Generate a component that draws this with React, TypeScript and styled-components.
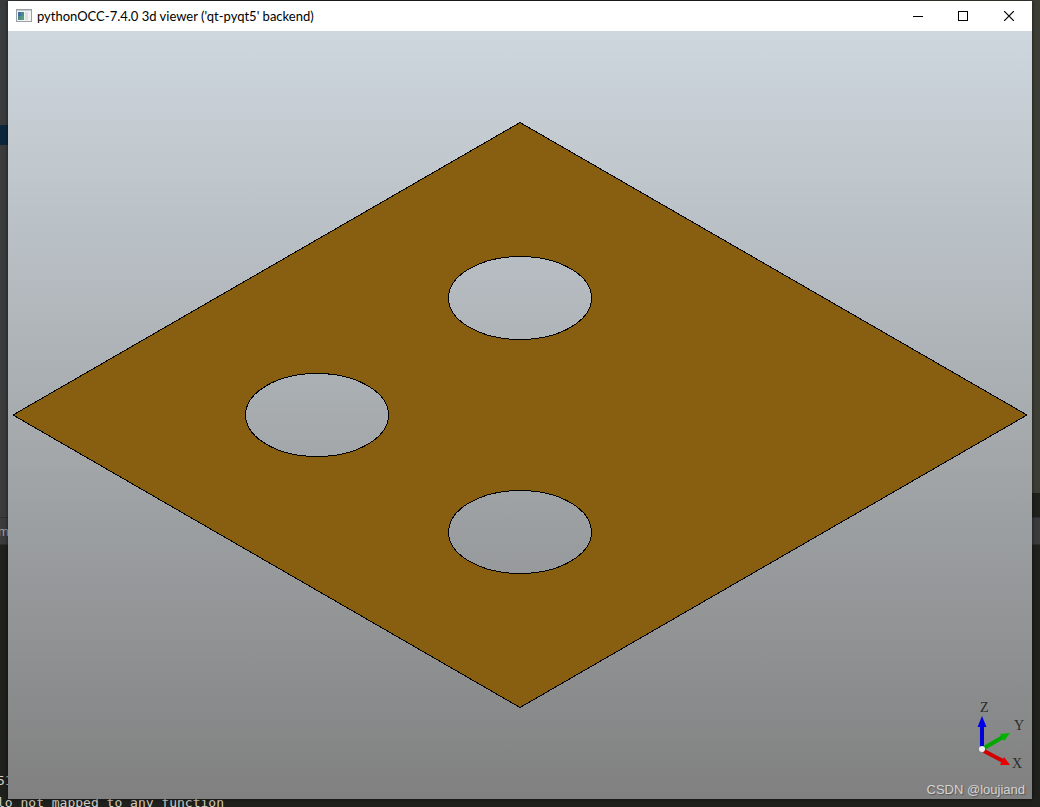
import React from "react";
import styled, { createGlobalStyle } from "styled-components";

const GlobalStyle = createGlobalStyle`
  *, *::before, *::after { box-sizing: border-box; }
  body { margin: 0; background: #20211c; }
`;

const Desktop = styled.div`
  position: relative;
  display: flex;
  min-height: 100vh;
  padding: 1px 8px 8px;
  overflow: hidden;
`;

const Editor = styled.div`
  position: absolute;
  inset: 0 0 -7px;
  display: flex;
  flex-direction: column;
  background: #20211c;
`;

const EditorBody = styled.div`
  flex: 1;
  display: flex;
  justify-content: space-between;
`;

const ProjectTree = styled.div`
  width: 120px;
  padding-top: 125px;
  background: #393b3d;
`;

const SelectedRow = styled.div`
  height: 20px;
  background: #0c273c;
`;

const CodeMargin = styled.div`
  width: 120px;
  border-bottom: 24px solid #20211c;
  background: #3d3e35;
`;

const ToolHeader = styled.div`
  height: 28px;
  border-top: 1px solid #2c2e2f;
  border-bottom: 1px solid #2c2e2f;
  background: #393b3d;
  color: #9da0a2;
  font: 13px/28px "Liberation Sans", sans-serif;
  text-indent: -2px;
`;

const Console = styled.div`
  height: 269px;
  display: flex;
  flex-direction: column;
  justify-content: flex-end;
  color: #d6d0c4;
  font: 13px/22px "DejaVu Sans Mono", monospace;
  white-space: pre;
`;

const ConsoleLine = styled.div`
  margin-left: -3px;
`;

const Window = styled.main`
  position: relative;
  flex: 1;
  display: flex;
  flex-direction: column;
  background: #fff;
  box-shadow: 0 0 4px rgba(0, 0, 0, 0.6);
`;

const TitleBar = styled.header`
  display: flex;
  align-items: center;
  height: 30px;
  padding-left: 8px;
  background: #fff;
`;

const Title = styled.h1`
  flex: 1;
  margin: 0 0 0 5px;
  color: #000;
  font: 400 13px/30px Lato, sans-serif;
`;

const WindowButton = styled.button`
  display: flex;
  align-items: center;
  justify-content: center;
  width: 46px;
  height: 30px;
  padding: 0;
  border: 0;
  background: transparent;
`;

const Viewport = styled.section`
  position: relative;
  flex: 1;
  display: flex;
  background: linear-gradient(#ced7de, #808080);
`;

const Scene = styled.svg`
  flex: 1;
  width: 100%;
  min-width: 0;
`;

const Corner = styled.div`
  position: absolute;
  right: 7px;
  bottom: 0;
  display: flex;
  flex-direction: column;
  align-items: flex-end;
`;

const AxisLabel = styled.text`
  fill: #2c2c2c;
  font: 14px "Liberation Serif", serif;
`;

const Watermark = styled.span`
  color: #d4d4d4;
  font: 13px/18px "Liberation Sans", sans-serif;
  text-shadow: 1px 1px 1px #555;
`;

const holes = [
  { cx: 512, cy: 267 },
  { cx: 309, cy: 384 },
  { cx: 512, cy: 501 },
];

function AppIcon() {
  return (
    <svg width="16" height="14" viewBox="0 0 16 14" shapeRendering="crispEdges" aria-hidden="true">
      <rect x="0.5" y="0.5" width="15" height="12" fill="#f2f2f2" stroke="#9aa1a9" />
      <rect x="1" y="1" width="14" height="1" fill="#c4cbd2" />
      <rect x="2" y="3" width="6" height="8" fill="#4d8a8c" />
      <rect x="2" y="3" width="3" height="4" fill="#3f6f9b" />
      <rect x="5" y="7" width="3" height="4" fill="#56a06d" />
      <rect x="9" y="3" width="3" height="8" fill="#dedfe1" />
    </svg>
  );
}

function Triad() {
  return (
    <svg width="54" height="81" viewBox="0 0 54 81" role="img" aria-label="Axes">
      <path d="M11 50V25" stroke="#0000d8" strokeWidth="4" />
      <path d="M11 16L15.5 27H6.5Z" fill="#0000e8" />
      <path d="M13 48L32 37" stroke="#00a800" strokeWidth="4" />
      <path d="M39 33L33 41L29 34Z" fill="#00b400" />
      <path d="M13 51L32 61" stroke="#d00000" strokeWidth="4" />
      <path d="M39 65L29 65L33 57Z" fill="#e80000" />
      <circle cx="11" cy="49" r="3" fill="#eee" />
      <AxisLabel x="9" y="12">Z</AxisLabel>
      <AxisLabel x="43" y="30">Y</AxisLabel>
      <AxisLabel x="41" y="68">X</AxisLabel>
    </svg>
  );
}

export default function App() {
  return (
    <Desktop>
      <GlobalStyle />
      <Editor>
        <EditorBody>
          <ProjectTree>
            <SelectedRow />
          </ProjectTree>
          <CodeMargin />
        </EditorBody>
        <ToolHeader>m</ToolHeader>
        <Console>
          <ConsoleLine>51</ConsoleLine>
          <ConsoleLine>lo not mapped to any function</ConsoleLine>
        </Console>
      </Editor>
      <Window>
        <TitleBar>
          <AppIcon />
          <Title>pythonOCC-7.4.0 3d viewer ('qt-pyqt5' backend)</Title>
          <WindowButton aria-label="Minimize">
            <svg width="12" height="10" shapeRendering="crispEdges">
              <path d="M2 5.5H12" stroke="#000" />
            </svg>
          </WindowButton>
          <WindowButton aria-label="Maximize">
            <svg width="10" height="10" shapeRendering="crispEdges">
              <rect x="0.5" y="0.5" width="9" height="9" fill="none" stroke="#000" />
            </svg>
          </WindowButton>
          <WindowButton aria-label="Close">
            <svg width="10" height="10">
              <path d="M0 0L10 10M10 0L0 10" stroke="#000" strokeWidth="1.2" />
            </svg>
          </WindowButton>
        </TitleBar>
        <Viewport>
          <Scene viewBox="0 0 1024 768" role="img" aria-label="Plate with three holes">
            <path
              fillRule="evenodd"
              fill="#885f10"
              stroke="#000"
              shapeRendering="crispEdges"
              d={
                "M512 91.5L1019 384L512 676.5L5 384Z" +
                holes.map(({ cx, cy }) => `M${cx - 71.5} ${cy}a71.5 41.5 0 1 0 143 0a71.5 41.5 0 1 0 -143 0Z`).join("")
              }
            />
          </Scene>
          <Corner>
            <Triad />
            <Watermark>CSDN @loujiand</Watermark>
          </Corner>
        </Viewport>
      </Window>
    </Desktop>
  );
}
